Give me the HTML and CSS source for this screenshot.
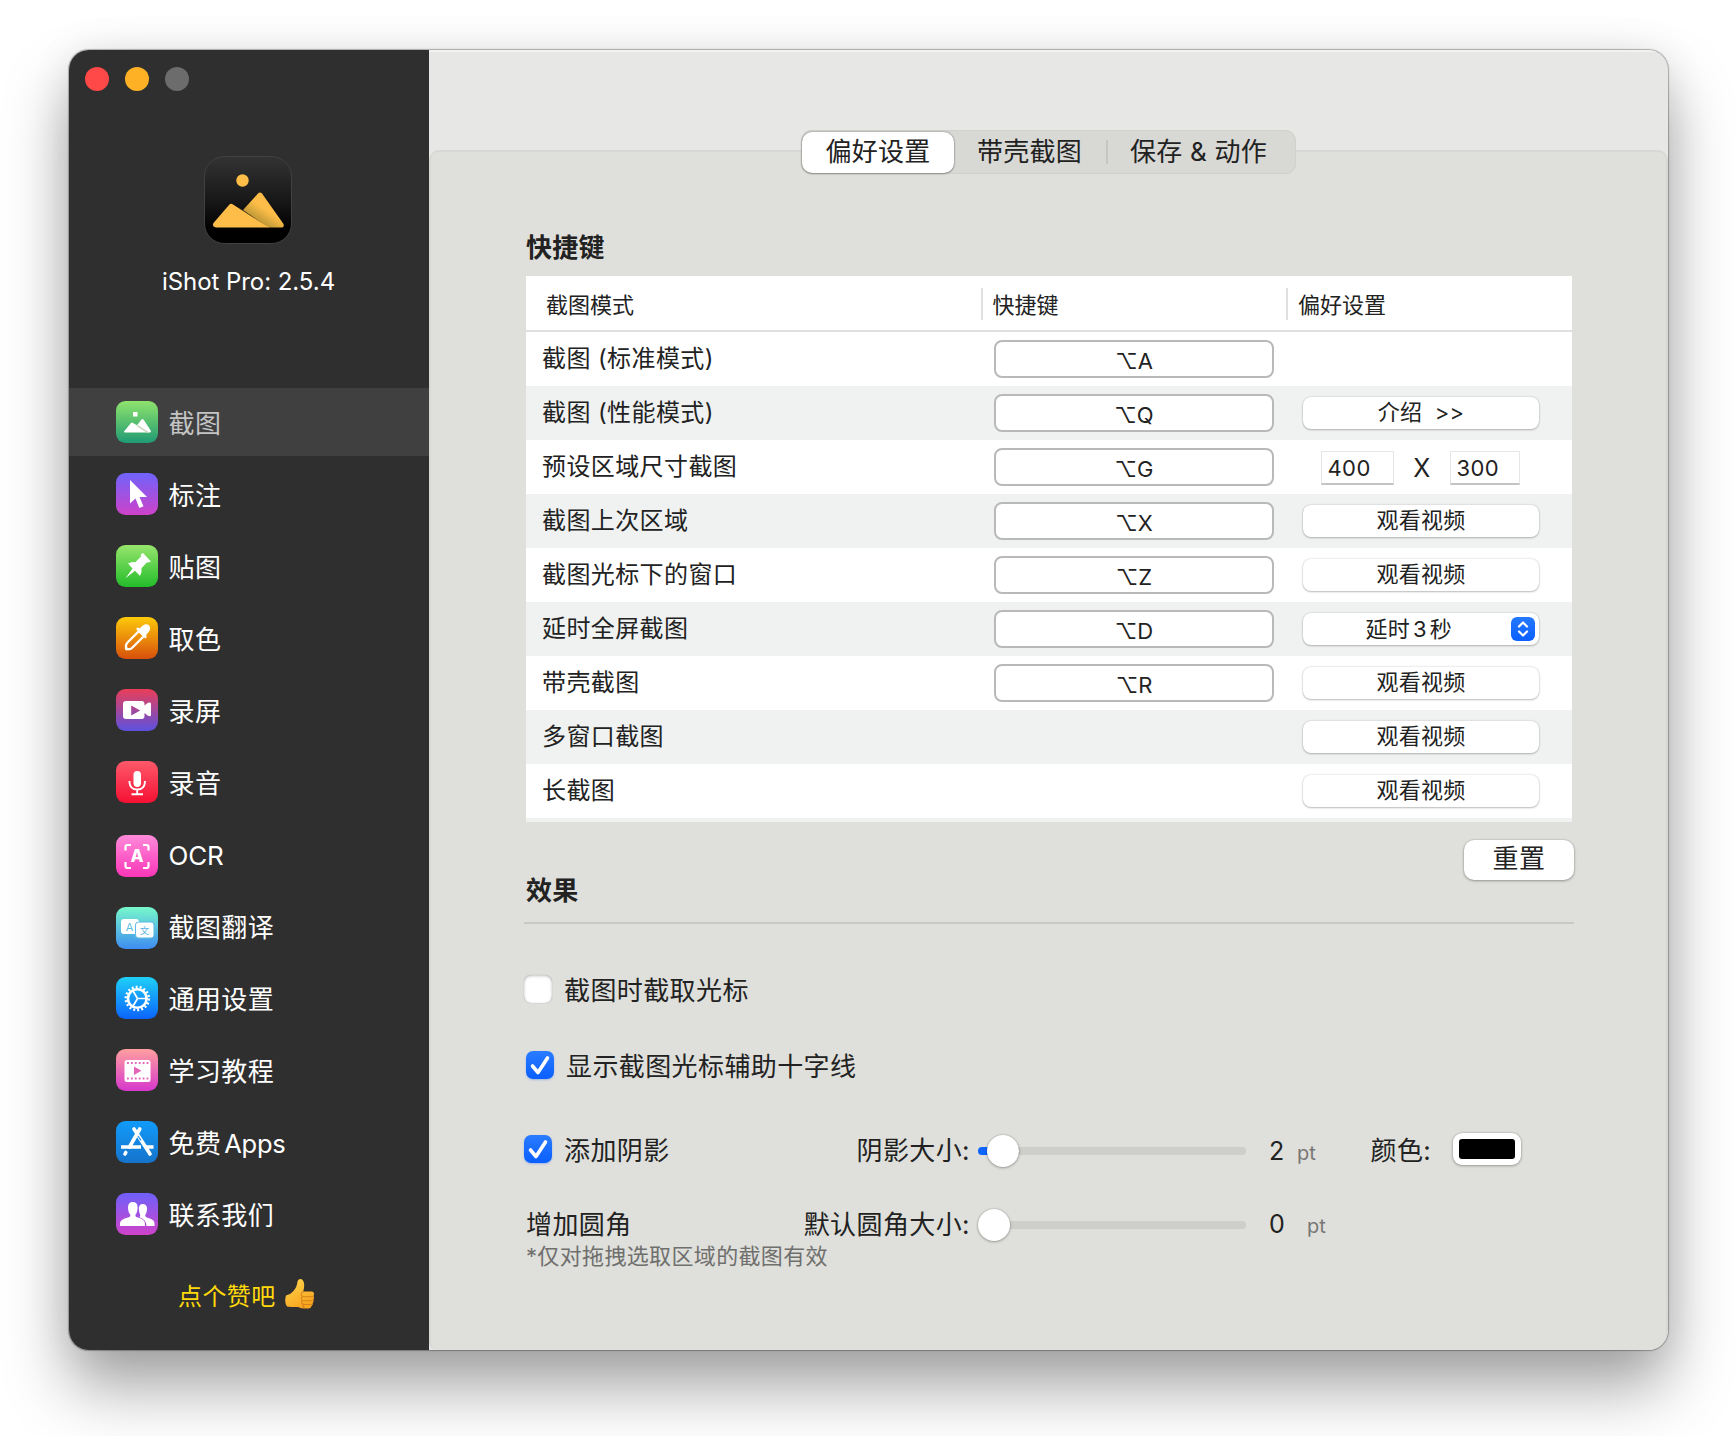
FILE: index.html
```html
<!DOCTYPE html>
<html lang="zh-CN">
<head>
<meta charset="utf-8">
<title>iShot Pro</title>
<link rel="stylesheet" href="styles.css">
</head>
<body>
<div class="window">
  <aside class="sidebar">
    <div class="lights"><i class="light red"></i><i class="light amber"></i><i class="light gray"></i></div>
    <svg class="app-icon" viewBox="0 0 88 88">
      <defs>
        <linearGradient id="appbg" x1="0" y1="0" x2="0" y2="1"><stop offset="0" stop-color="#333"/><stop offset=".5" stop-color="#181818"/><stop offset=".85" stop-color="#000"/></linearGradient>
        <linearGradient id="hill" gradientUnits="userSpaceOnUse" x1="48" y1="62" x2="56" y2="50"><stop offset="0" stop-color="#b99535"/><stop offset="1" stop-color="#fdbd48"/></linearGradient>
      </defs>
      <rect x=".5" y=".5" width="87" height="87" rx="20" fill="url(#appbg)" stroke="#414141"/>
      <circle cx="38.500" cy="24.500" r="6.200" fill="#fdbd48"/>
      <path d="M39 54 54 37.500q2-2 4 0L79.500 68q1 3.500-2.500 3.500H64z" fill="url(#hill)"/>
      <path d="M9.500 67 25 49q2-2 4-.5L65 71.500H12q-4.500-1-2.500-4.500z" fill="#fdbd48"/>
    </svg>
    <div class="app-name">iShot Pro: 2.5.4</div>
    <nav class="nav">
      <a class="item active"><svg class="icon" style="--a:#8fe36c;--b:#1f9b73" viewBox="0 0 42 42"><path fill="#fff" d="M17 11h4.500v4.500H17zM8 30.500 15 22q1-.8 2 0l4 2.200 4.500-5.700q1-1 2 0L35 30q0 1.500-1 1.500H8.500z"/><path d="m21 24.500 11 7" stroke="#ccd8c4" stroke-width="1.500"/></svg><span>截图</span></a>
      <a class="item"><svg class="icon" style="--a:#6f63fa;--b:#cf42c9" viewBox="0 0 42 42"><path fill="#fff" d="M14 7v23.500l5.500-5 3.800 9.500 4.200-1.700-4-9.300H31z"/></svg><span>标注</span></a>
      <a class="item"><svg class="icon" style="--a:#97e56c;--b:#23bd2a" viewBox="0 0 42 42"><path fill="#fff" d="m27 8 8 8.500-2.500 1-1.500-.2-5.500 6q.8 4.500-1.500 7.700l-5-5.200-9.500 7.400 7-9.700-4.500-5q3.500-2.300 7.300-1.300l5.700-5.700-.3-2z"/></svg><span>贴图</span></a>
      <a class="item"><svg class="icon" style="--a:#fdca0a;--b:#d84f0c" viewBox="0 0 42 42"><path d="M10 32v-3.500q.2-1.500 1.500-3L23 14l5 5-11.500 11.500q-1.500 1.500-3 1.600z" fill="none" stroke="#fff" stroke-width="2.300" stroke-linejoin="round"/><path fill="#fff" d="m20 12 1.800-1.600 2 .8 3-2.700q4-2.500 6.300 0 2.300 3-.5 6.500l-2.500 3 .7 2-1.500 1.600zM9 31.500l1.500-2 2.200 2.300-2 1.700z"/></svg><span>取色</span></a>
      <a class="item"><svg class="icon" style="--a:#ea3e58;--b:#5c51df" viewBox="0 0 42 42"><path fill="#fff" fill-rule="evenodd" d="M10 12h15.500q3 0 3 3v1.500l3.500-2.800q3-.7 3 1v11.600q-.5 1.500-3 .5L28.500 24v3q0 3-3 3H10q-3 0-3-3V15q0-3 3-3zm5.200 4.500v10l9-5z"/></svg><span>录屏</span></a>
      <a class="item"><svg class="icon" style="--a:#fe596a;--b:#f51033" viewBox="0 0 42 42"><rect x="17.500" y="10" width="7.500" height="16" rx="3.700" fill="#fff"/><path d="M13.500 20v1.500q.5 7 7.700 7t7.700-7V20M21.200 28.500v4.500M15.500 33.200h11.500" fill="none" stroke="#fff" stroke-width="1.900"/></svg><span>录音</span></a>
      <a class="item low"><svg class="icon" style="--a:#ff8ad9;--b:#fb36b8" viewBox="0 0 42 42"><path d="M9.500 15.500V12q0-2 2-2H15M27 10h3.500q2 0 2 2v3.500M32.500 27v4q0 2-2 2H27M15 33h-3.500q-2 0-2-2v-4" fill="none" stroke="#fff" stroke-width="2.200"/><text x="21" y="27" class="glyph ocr">A</text></svg><span class="latin-label">OCR</span></a>
      <a class="item low"><svg class="icon" style="--a:#77f8cb;--b:#3e8df2" viewBox="0 0 42 42"><rect x="5" y="12" width="18" height="15" rx="3" fill="#fff"/><text x="13.500" y="23.500" class="glyph latin">A</text><rect x="19.500" y="15" width="18.500" height="16" rx="3" fill="#fff" stroke="#5fb8e4" stroke-width="1"/><text x="28.500" y="26.500" class="glyph han">文</text></svg><span>截图翻译</span></a>
      <a class="item"><svg class="icon" style="--a:#1fd0f8;--b:#0b64fc" viewBox="0 0 42 42"><circle cx="21.300" cy="21.500" r="11.600" fill="none" stroke="#fff" stroke-width="2.400" stroke-dasharray="2 2.050"/><circle cx="21.300" cy="21.500" r="9.300" fill="none" stroke="#fff" stroke-width="2.600"/><path d="M21.500 21.500h10M21.500 21.500 16.500 13M21.500 21.500l-5 8.500" stroke="#fff" stroke-width="1.700"/></svg><span>通用设置</span></a>
      <a class="item"><svg class="icon" style="--a:#ff9f9f;--b:#d638cc" viewBox="0 0 42 42"><rect x="8.500" y="11" width="26" height="22" rx="2.500" fill="#fff"/><path d="M11 14h21.500M11 29.500h21.500" stroke="#e56abd" stroke-width="2" stroke-dasharray="1.900 2"/><path d="m18 17.500 7.500 4.200L18 26z" fill="#e565bb"/></svg><span>学习教程</span></a>
      <a class="item"><svg class="icon" style="--a:#119bfa;--b:#1573cb" viewBox="0 0 42 42"><g stroke="#fff" stroke-width="3.600" stroke-linecap="round" fill="none"><path d="m18 8 16 25M23.800 8 13.500 26M9.800 31.500 9 33"/></g><path d="M5 26h20M29 26h8.500" stroke="#fff" stroke-width="3.600"/><path d="m22 15 3 4.500" stroke="#1789e6" stroke-width="1.200"/></svg><span>免费<span class="apps">Apps</span></span></a>
      <a class="item"><svg class="icon" style="--a:#6f60fa;--b:#d043c9" viewBox="0 0 42 42"><g fill="#fff"><path d="M4 33v-3q.5-4 8-5.500 2.500-.5 2.500-2.500-2.500-2.500-2.500-8 .3-5 4.800-5t4.800 5q0 5.500-2.300 8 0 2 2.500 2.500Q29 26 29 31v2z"/><path d="M30.500 33q0-6-7-8.700l.8-2Q23 20 22.800 15q.5-4 4-4t4.300 4q0 5-2 7.500 0 1.500 2.400 2.300 7 1.700 7 5.700V33z"/></g></svg><span>联系我们</span></a>
    </nav>
    <div class="like"><span>点个赞吧</span>
      <svg class="thumb" viewBox="0 0 30 32"><defs><linearGradient id="skin" x1="0" y1="0" x2=".5" y2="1"><stop offset="0" stop-color="#ffd84f"/><stop offset="1" stop-color="#f7a41f"/></linearGradient></defs>
        <path d="M1 17.500q4-.5 7-4 4-4 4.500-10Q13 .5 16 1q4 1.500 3 9l-.8 3.500H27q2.500.5 2 3l-.4 1.500q1 1.500-.2 3.500.8 2-.7 3.500.3 2-1.200 3-.5 2.500-3.500 2.500-6.500.5-10-1.500Q5 29 2 28.500q-3-4.500-1-11z" fill="url(#skin)"/>
        <path d="M18 14q-3.500 2-.5 4.500-2.500 2 0 4-2 2.500.5 3.500-1 2 1.500 4M18 18.700h10.500M18 22.700h10M18.500 26.500H27" fill="none" stroke="#d8821a" stroke-width="1.100" stroke-linecap="round"/></svg>
    </div>
  </aside>
  <main class="main">
    <section class="panel">
      <div class="tabs"><div class="tab selected">偏好设置</div><div class="tab">带壳截图</div><i class="tab-line"></i><div class="tab last">保存 &amp; 动作</div></div>
      <div class="content">
        <h2>快捷键</h2>
        <div class="table">
          <div class="row head"><div class="c1">截图模式</div><div class="c2">快捷键</div><div class="c3">偏好设置</div></div>
          <div class="row"><div class="c1">截图 (标准模式)</div><div class="c2"><div class="key">⌥A</div></div><div class="c3"></div></div>
          <div class="row"><div class="c1">截图 (性能模式)</div><div class="c2"><div class="key">⌥Q</div></div><div class="c3"><div class="btn wide">介绍 &gt;&gt;</div></div></div>
          <div class="row"><div class="c1">预设区域尺寸截图</div><div class="c2"><div class="key">⌥G</div></div><div class="c3 size"><div class="field">400</div><span class="times">X</span><div class="field narrow">300</div></div></div>
          <div class="row"><div class="c1">截图上次区域</div><div class="c2"><div class="key">⌥X</div></div><div class="c3"><div class="btn">观看视频</div></div></div>
          <div class="row"><div class="c1">截图光标下的窗口</div><div class="c2"><div class="key">⌥Z</div></div><div class="c3"><div class="btn">观看视频</div></div></div>
          <div class="row"><div class="c1">延时全屏截图</div><div class="c2"><div class="key">⌥D</div></div><div class="c3"><div class="btn popup"><span class="delay">延时<b>3</b>秒</span><svg class="chev" viewBox="0 0 24 24"><path d="m8 9.500 4-4 4 4M8 14.500l4 4 4-4" fill="none" stroke="#fff" stroke-width="2.200" stroke-linecap="round" stroke-linejoin="round"/></svg></div></div></div>
          <div class="row"><div class="c1">带壳截图</div><div class="c2"><div class="key">⌥R</div></div><div class="c3"><div class="btn">观看视频</div></div></div>
          <div class="row"><div class="c1">多窗口截图</div><div class="c2"></div><div class="c3"><div class="btn">观看视频</div></div></div>
          <div class="row"><div class="c1">长截图</div><div class="c2"></div><div class="c3"><div class="btn">观看视频</div></div></div>
        </div>
        <div class="effects-head"><h2>效果</h2><div class="reset">重置</div></div>
        <div class="rule"></div>
        <div class="opt first"><i class="box"></i><span>截图时截取光标</span></div>
        <div class="opt second"><i class="box on"><svg viewBox="0 0 28 28"><path d="m6.500 15 5.500 6.500L21.500 7" /></svg></i><span>显示截图光标辅助十字线</span></div>
        <div class="opt third"><i class="box on"><svg viewBox="0 0 28 28"><path d="m6.500 15 5.500 6.500L21.500 7" /></svg></i><span>添加阴影</span>
          <div class="controls"><span class="label">阴影大小:</span><div class="slider"><i class="fill"></i><i class="knob at-two"></i></div><span class="value">2</span><span class="unit">pt</span><span class="color-label">颜色:</span><div class="well"><i></i></div></div></div>
        <div class="opt fourth"><span>增加圆角</span>
          <div class="controls"><span class="label">默认圆角大小:</span><div class="slider"><i class="knob"></i></div><span class="value">0</span><span class="unit far">pt</span></div></div>
        <p class="note">*仅对拖拽选取区域的截图有效</p>
      </div>
    </section>
  </main>
</div>
</body>
</html>
```
FILE: styles.css
```css
* { box-sizing: border-box; }
html, body { height: 100%; }
body {
  margin: 0;
  padding: 50px 68.500px;
  background: #fff;
  overflow: hidden;
  font-family: Inter, "Noto Sans CJK SC", sans-serif;
  font-size: 26px;
  letter-spacing: .4px;
  color: #222;
}
i, b { font-style: normal; font-weight: 400; }
.window {
  display: flex;
  width: 1599px;
  height: 1299.500px;
  border-radius: 20px;
  background: #e7e7e5;
  box-shadow: 0 0 1px .5px rgba(0,0,0,.28), 0 37px 64px rgba(0,0,0,.36), 0 0 40px rgba(0,0,0,.08);
  overflow: hidden;
}

/* sidebar */
.sidebar {
  display: flex;
  flex: none;
  flex-direction: column;
  width: 360px;
  background: #2f2f2f;
  color: #fff;
}
.lights { display: flex; gap: 16px; padding: 16.500px 0 0 16px; height: 106px; }
.light { width: 24px; height: 24px; border-radius: 50%; }
.red { background: #ff4848; }
.amber { background: #ffb126; }
.gray { background: #6c6c6c; }
.app-icon { width: 88px; height: 88px; margin-left: 135.500px; }
.app-name { margin-top: 18px; height: 40px; line-height: 40px; text-align: center; font-size: 24px; letter-spacing: -.05px; }
.nav { display: flex; flex-direction: column; gap: 4px; margin-top: 86px; }
.item { display: flex; align-items: center; height: 68px; padding-left: 47px; }
.item > span { margin: 4px 0 0 11px; line-height: 40px; }
.active { background: #404040; }
.active > span { color: #c4c4c4; }
.icon { width: 42px; height: 42px; border-radius: 9.500px; background: linear-gradient(var(--a), var(--b)); }
.low .icon { position: relative; top: 2px; }
.glyph { text-anchor: middle; letter-spacing: 0; }
.ocr { font-size: 17px; font-weight: 800; fill: #fff; }
.latin { font-size: 11px; fill: #5bbfdf; }
.han { font-size: 9.500px; fill: #5bb4e4; }
.latin-label { letter-spacing: -.2px; }
.apps { margin-left: 3px; font-size: 25.500px; letter-spacing: -.3px; }
.like { display: flex; align-items: center; gap: 9px; margin: 26px 0 0 109.500px; height: 40px; color: #ffd90a; font-size: 24px; letter-spacing: .4px; }
.thumb { width: 30px; height: 32px; }

/* panel */
.main { flex: 1; padding-top: 100px; box-shadow: inset 0 2px 0 #f2f2f0; }
.panel { height: 1199.500px; background: #dfdfdb; border: 2px solid #d8d8d5; border-bottom-width: 0; border-radius: 10px 10px 8px 8px; }
.tabs { display: flex; align-items: center; width: 495px; height: 44px; margin: -22px auto 0; background: #d8d8d5; border-radius: 11px; box-shadow: inset 0 0 2px rgba(0,0,0,.12); letter-spacing: .2px; }
.tab { height: 41px; line-height: 39px; width: 152px; text-align: center; }
.selected { background: #fff; border-radius: 10px; margin: 0 0 0 1px; padding-left: 1px; box-shadow: 0 0 2px rgba(0,0,0,.45), 0 1px 2px rgba(0,0,0,.25); }
.tab-line { width: 2px; height: 24px; background: #c6c6c3; }
.tab.last { width: 182px; }
.content { padding: 54px 93.500px 0 95.500px; }
h2 { margin: 0; font-size: 26px; line-height: 40px; font-weight: 700; letter-spacing: .3px; }

/* shortcut table */
.table { margin-top: 8px; height: 546px; background: #f0f2f1; overflow: hidden; }
.row { display: grid; grid-template-columns: 454.500px 305.500px 1fr; height: 54px; background: #fff; }
.row:nth-child(odd) { background: #f0f2f1; }
.row > div { display: flex; align-items: center; }
.row > .c1 { padding: 0 0 6px 16px; font-size: 24px; }
.c2 { padding-left: 13.500px; font-size: 22px; }
.c3 { padding-left: 17px; }
.row.head { height: 56px; background: #fff; border-bottom: 2px solid #e0e0e0; font-size: 22px; letter-spacing: 0; }
.row.head .c1 { padding: 0 0 0 20px; font-size: 22px; }
.head .c2, .head .c3 { height: 32px; margin-top: 12px; padding: 0 0 3px 10px; border-left: 2px solid #e0e0e0; }
.key { width: 280px; height: 38px; border: 2px solid #b9b9b9; border-radius: 8px; background: #fff; text-align: center; line-height: 38px; letter-spacing: 0; }
.btn { width: 236px; height: 32px; border-radius: 8px; background: #fff; text-align: center; font-size: 22px; line-height: 31px; letter-spacing: .2px; box-shadow: 0 0 2px rgba(0,0,0,.22), 0 1px 2px rgba(0,0,0,.22); }
.wide { word-spacing: 6px; }
.popup { display: flex; align-items: center; justify-content: flex-end; padding-right: 4px; }
.delay { margin-right: 59px; }
.delay b { margin: 0 3px; }
.chev { width: 24px; height: 24px; border-radius: 6px; background: linear-gradient(#2479ff, #0a5fff); }
.row > .size { padding-left: 35px; }
.field { width: 73px; height: 34px; margin-top: 2px; padding-left: 5.500px; border: 1px solid #e6e6e6; border-bottom: 2px solid #c4c4c4; font-size: 22px; line-height: 32px; }
.narrow { width: 70px; }
.times { width: 56px; text-align: center; font-size: 25px; margin-top: 2px; }

/* effects */
.effects-head { display: flex; justify-content: space-between; height: 72px; margin-top: 18px; margin-right: -2px; }
.effects-head h2 { margin-top: 31px; }
.reset { width: 110px; height: 40px; border-radius: 10px; background: #fff; text-align: center; line-height: 37px; box-shadow: 0 0 2px rgba(0,0,0,.2), 0 1px 3px rgba(0,0,0,.3); }
.rule { height: 2px; margin: 9.500px -2px 0; background: #c8c8c5; }
.opt { display: flex; align-items: center; height: 40px; margin-left: -2px; line-height: 40px; }
.opt > span { margin: 4px 0 0 12px; white-space: nowrap; }
.first { margin-top: 45.500px; }
.second { margin: 36px 0 0; }
.third { margin-top: 44px; }
.fourth { margin-top: 34px; }
.fourth > span { margin: 4px 0 0 2px; }
.box { width: 28px; height: 28px; border-radius: 7px; background: #fff; box-shadow: inset 0 1px 3px rgba(0,0,0,.25), 0 0 1px rgba(0,0,0,.3); }
.on { background: linear-gradient(#2a7cff, #0a5fff); box-shadow: 0 1px 2px rgba(10,95,255,.3); }
.on svg { display: block; fill: none; stroke: #fff; stroke-width: 3.600px; stroke-linecap: round; stroke-linejoin: round; }
.controls { display: flex; align-items: center; width: 772px; margin-left: auto; margin-right: 0; }
.label { flex: none; width: 170px; text-align: right; margin: 4px 8px 0 0; }
.slider { position: relative; width: 268px; height: 8px; margin-top: 3px; border-radius: 4px; background: #cececb; }
.fill { display: block; width: 20px; height: 8px; border-radius: 4px; background: #0f66ff; }
.knob { position: absolute; left: 0; top: -12px; width: 32px; height: 32px; border-radius: 50%; background: #fff; box-shadow: 0 0 2px rgba(0,0,0,.25), 0 1px 3px rgba(0,0,0,.25); }
.at-two { left: 9px; }
.value { width: 28px; margin: 3px 0 0 23px; font-size: 25px; }
.fourth .value { margin-top: 1px; }
.unit { width: 30px; margin-top: 8px; font-size: 20px; color: #777775; letter-spacing: 0; }
.far { margin: 6px 0 0 10px; }
.color-label { margin: 4px 22px 0 43.500px; }
.well { width: 68px; height: 32px; padding: 6px; border-radius: 9px; background: #fff; box-shadow: 0 0 2px rgba(0,0,0,.25), 0 1px 3px rgba(0,0,0,.25); }
.well i { display: block; height: 20px; border-radius: 3px; background: #000; }
.note { margin: -2px 0 0; font-size: 22px; line-height: 30px; color: #6f6f6d; letter-spacing: .35px; }
```
